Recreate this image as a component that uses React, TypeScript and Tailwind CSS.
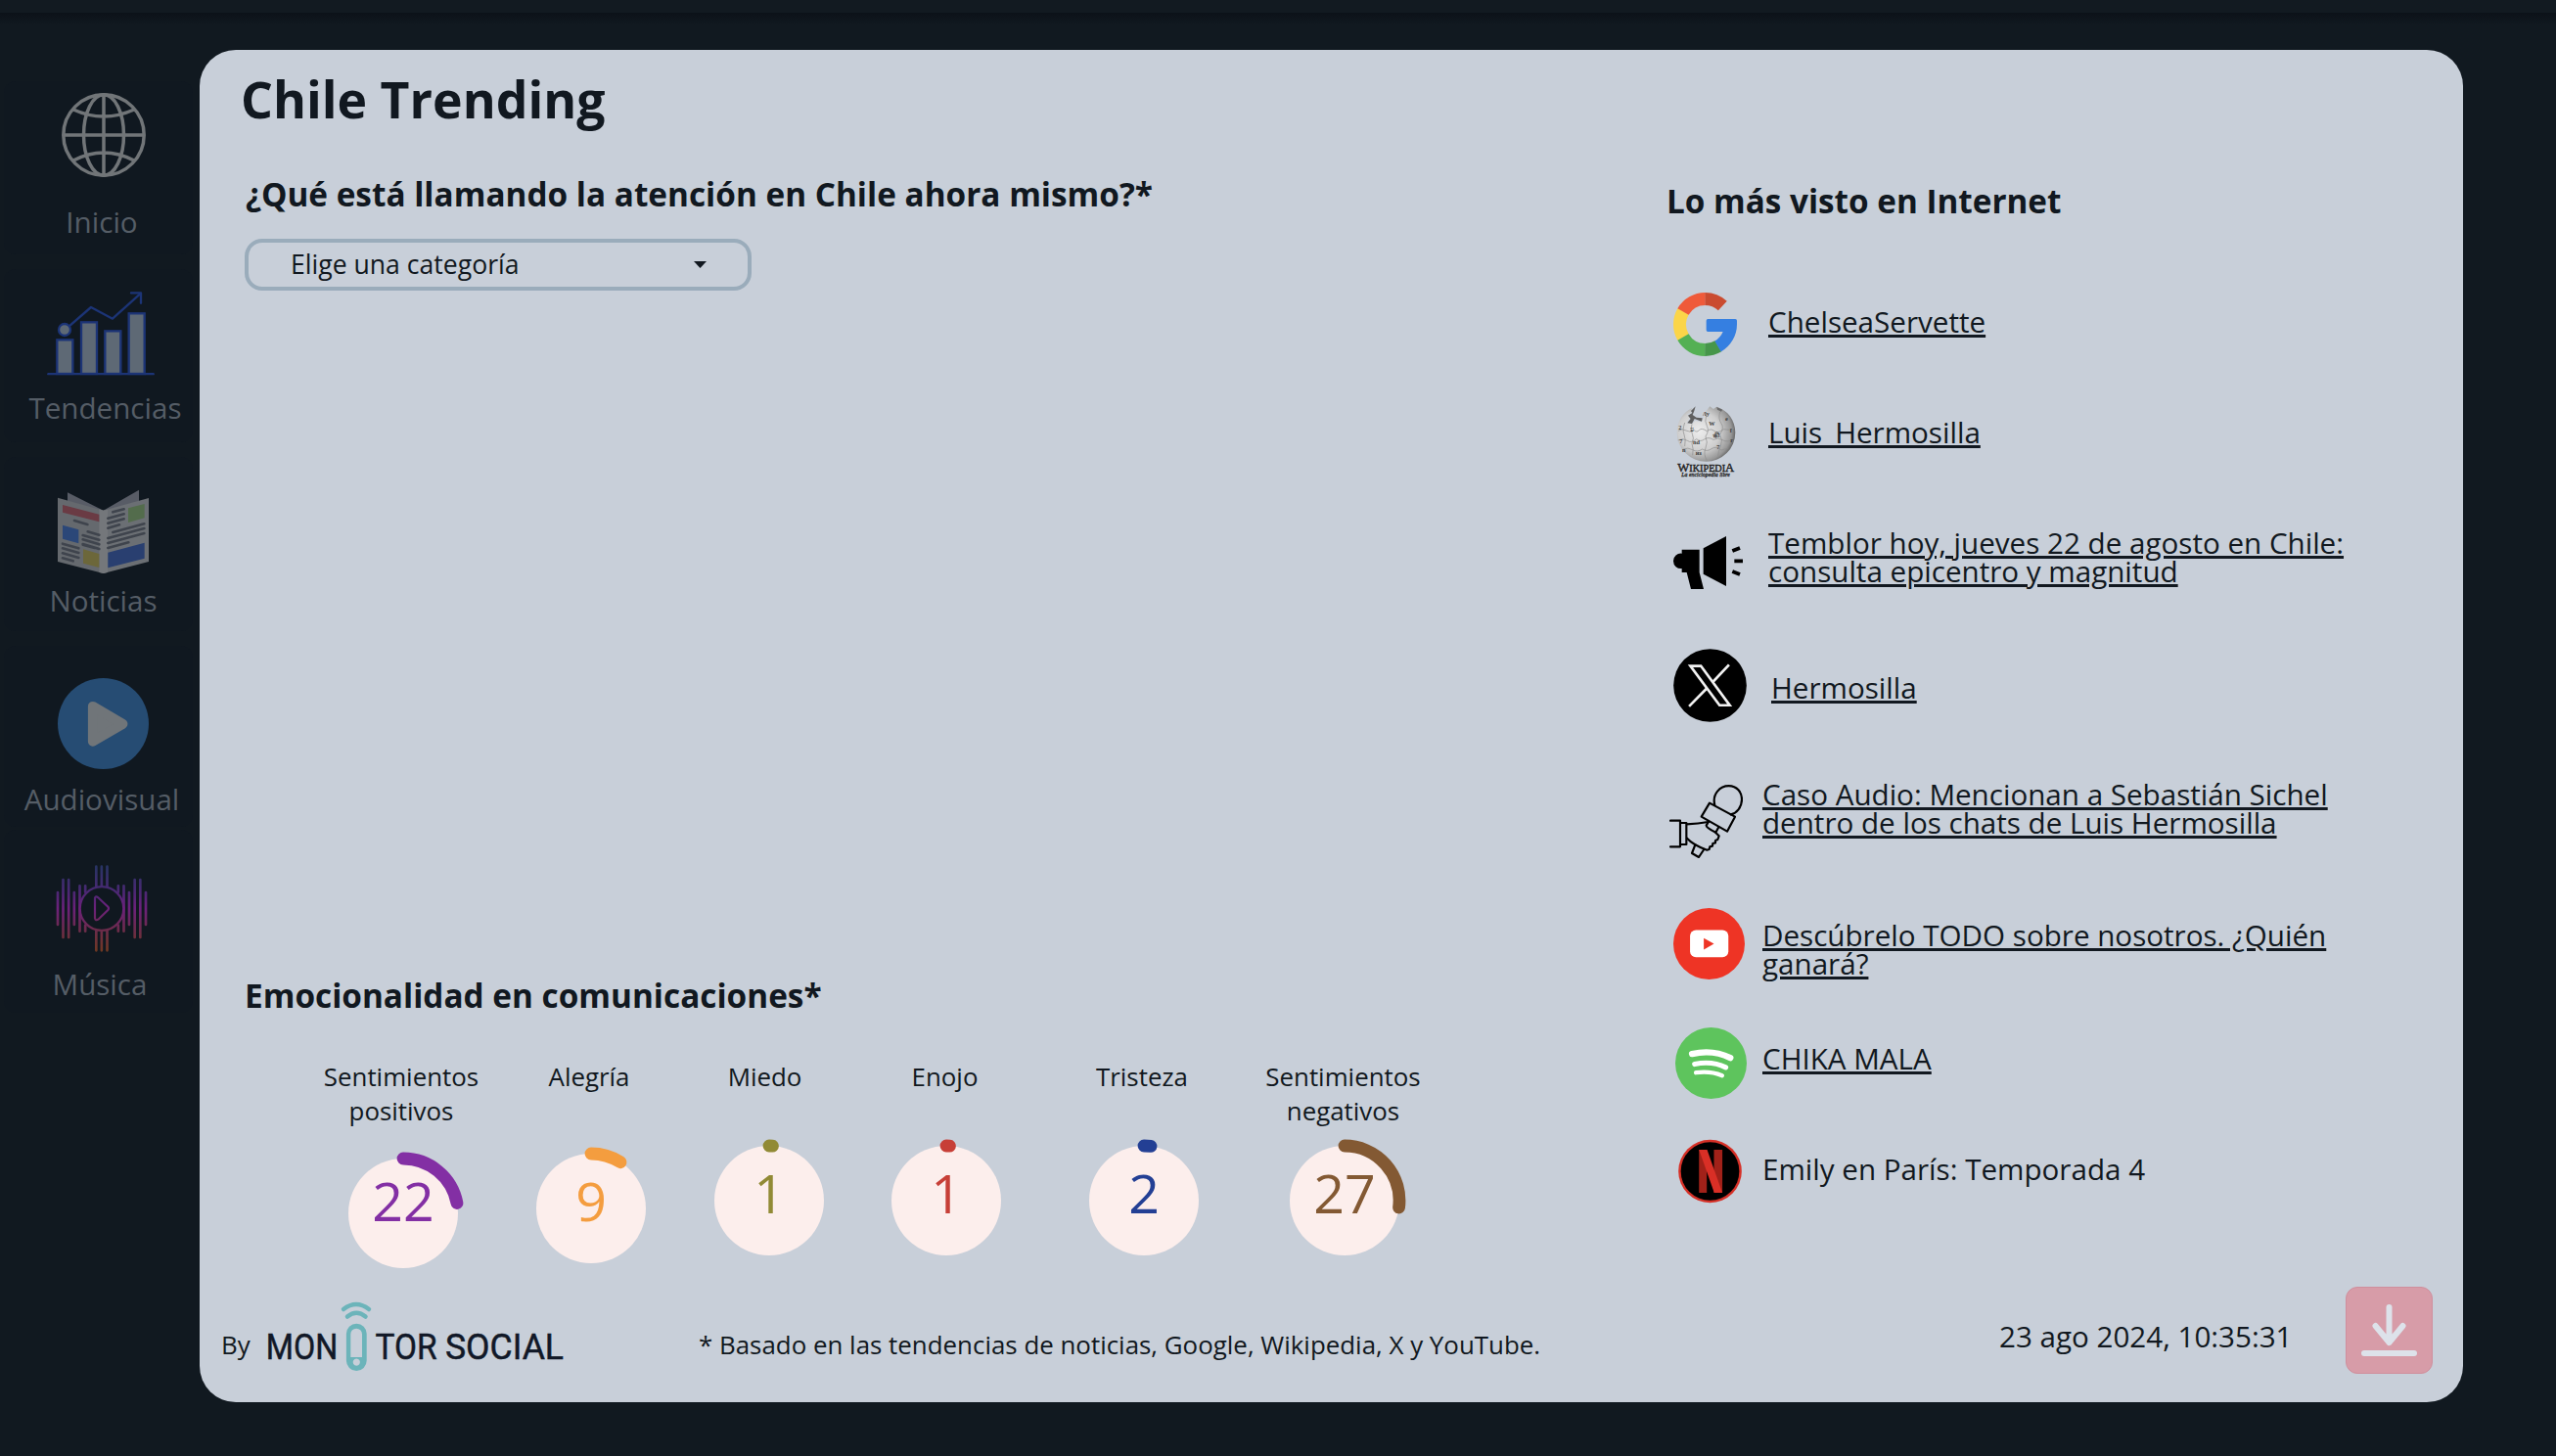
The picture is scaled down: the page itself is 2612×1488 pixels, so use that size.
import type { ReactNode } from 'react';

/* ---------- helpers ---------- */

function arcPath(cx: number, cy: number, r: number, from: number, to: number) {
  const a = (from * Math.PI) / 180;
  const b = (to * Math.PI) / 180;
  const large = Math.abs(to - from) > 180 ? 1 : 0;
  return `M${cx + r * Math.cos(a)} ${cy + r * Math.sin(a)}A${r} ${r} 0 ${large} 1 ${cx + r * Math.cos(b)} ${cy + r * Math.sin(b)}`;
}

/* ---------- sidebar icons ---------- */

function GlobeIcon() {
  return (
    <svg viewBox="0 0 86 86" className="ml-[59px] mt-3 h-[86px] w-[86px]" fill="none" stroke="#717578" strokeWidth="3.500">
      <circle cx="43" cy="43" r="41.2" />
      <ellipse cx="43" cy="43" rx="20.5" ry="41.2" />
      <path d="M43 1.7v82.6M1.7 43h82.6M12 17q31 14 62 0M12 69q31-16 62 0" />
    </svg>
  );
}

function TrendIcon() {
  return (
    <svg viewBox="144 114 330 258" className="ml-[44px] mt-[23px] h-[86px] w-[110px]" fill="none" stroke="#1c3476" strokeWidth="7">
      <g fill="#5e6975">
        <rect x="175" y="262" width="48" height="104" />
        <rect x="249" y="208" width="48" height="158" />
        <rect x="322" y="235" width="48" height="131" />
        <rect x="395" y="181" width="48" height="185" />
        <circle cx="198" cy="231" r="18" />
      </g>
      <path d="M148 366.500H470" strokeLinecap="round" />
      <path d="M212 220L279 162L345 197L432 119" strokeLinejoin="round" />
      <path d="M402 118H432V149" strokeLinecap="round" strokeLinejoin="round" />
    </svg>
  );
}

function NewsIcon() {
  return (
    <svg viewBox="177 720 279 258" className="ml-[55px] mt-[33px] h-[86px] w-[93px]">
      <path d="M207 730L317 785L426 722V790H207Z" fill="#585c66" />
      <path d="M177 746L317 785V978L177 942Z" fill="#65696e" />
      <path d="M317 785L456 747V942L317 978Z" fill="#6b6f74" />
      <path d="M304 781L317 785L330 782V975L317 978L304 975Z" fill="#74777b" />
      <path d="M192 768L304 797V820L192 791Z" fill="#6a3b44" />
      <path d="M192 830L241 844V886L192 872Z" fill="#2b4778" />
      <path d="M255 904L304 918V960L255 947Z" fill="#6c673a" />
      <path d="M393 778L443 765V808L393 822Z" fill="#536c4c" />
      <path d="M331 914L443 884V932L331 961Z" fill="#293f70" />
      <g stroke="#3f444d" strokeWidth="8" strokeLinecap="round">
        <path d="M228 816L268 828M269 850L304 860M254 861L304 875M254 874L304 889M254 888L304 903M254 890L290 900" />
        <path d="M192 887L241 901M192 901L241 915M192 916L241 930M192 931L224 940" />
        <path d="M346 790L380 781M331 809L380 796M331 824L380 811M331 839L366 829" />
        <path d="M346 852L442 826M331 870L442 840M331 885L442 855M331 900L394 883" />
      </g>
    </svg>
  );
}

function PlayIcon() {
  return (
    <svg viewBox="0 0 280 280" className="ml-[55px] mt-[33px] h-[93px] w-[93px]">
      <circle cx="140" cy="140" r="140" fill="#264c73" />
      <path d="M108 87L200 141L108 195Z" fill="#707579" stroke="#707579" strokeWidth="30" strokeLinejoin="round" />
    </svg>
  );
}

const WAVES: [number, number, number][] = [
  [177, 756, 855], [193.500, 717, 894], [210.500, 717, 894], [227.500, 756, 855], [244.500, 736, 875],
  [261.500, 736, 755], [261.500, 857, 875], [295, 677, 740], [311.500, 677, 738], [328.500, 677, 740],
  [295, 872, 934], [311.500, 874, 934], [328.500, 872, 934], [362.500, 736, 755], [362.500, 857, 875],
  [379.500, 736, 875], [396, 756, 855], [413, 717, 894], [430, 717, 894], [447, 756, 855],
];

function MusicIcon() {
  return (
    <svg viewBox="171 672 282 266" className="ml-[53px] mt-9 h-[88.700px] w-[94px]" fill="none" stroke="url(#wave)" strokeWidth="8" strokeLinecap="round">
      <defs>
        <linearGradient id="wave" gradientUnits="userSpaceOnUse" x1="0" y1="674" x2="0" y2="936">
          <stop offset="0" stopColor="#273463" />
          <stop offset="0.300" stopColor="#4a2873" />
          <stop offset="0.500" stopColor="#6c217b" />
          <stop offset="0.750" stopColor="#6b2b4b" />
          <stop offset="1" stopColor="#6f3822" />
        </linearGradient>
      </defs>
      {WAVES.map(([x, a, b], i) => (
        <path key={i} d={`M${x} ${a}L${x + 0.01} ${b}`} />
      ))}
      <circle cx="312" cy="805.500" r="67" fill="#101820" strokeWidth="7" />
      <path d="M291 773Q293 766 300 771L331 800Q335 805 331 810L301 839Q293 844 291 835Z" strokeWidth="6.500" />
    </svg>
  );
}

interface NavEntry {
  label: string;
  icon: ReactNode;
  card: string;
  text: string;
}

const NAV: NavEntry[] = [
  { label: 'Inicio', icon: <GlobeIcon />, card: 'mt-[83px] h-[177px]', text: 'mt-[26px] pl-[7px]' },
  { label: 'Tendencias', icon: <TrendIcon />, card: 'mt-[15px] h-[177px]', text: 'mt-[13px] pl-[14px]' },
  { label: 'Noticias', icon: <NewsIcon />, card: 'mt-[15px] h-[178px]', text: 'mt-[8px] pl-[10px]' },
  { label: 'Audiovisual', icon: <PlayIcon />, card: 'mt-[15px] h-[185px]', text: 'mt-[11px] pl-[7px]' },
  { label: 'Música', icon: <MusicIcon />, card: 'mt-[3px] h-[187px]', text: 'mt-[13px] pl-[3px]' },
];

/* ---------- source icons ---------- */

function GoogleIcon() {
  const seg = (from: number, to: number, color: string) => (
    <path d={arcPath(188.5, 514.5, 78, from, to)} stroke={color} strokeWidth="39" fill="none" />
  );
  return (
    <svg viewBox="91 417 195 195" className="ml-[10px] mt-[19px] h-[65px] w-[65px]">
      {seg(149.5, 210.5, '#fbd549')}
      {seg(210, 270.5, '#ef5a3a')}
      {seg(270, 313.3, '#ca4b30')}
      {seg(90, 150, '#54b054')}
      {seg(59, 90.5, '#46964a')}
      <path
        d="M237 598.500A97.500 97.500 0 0 0 286 514V503Q286 498 281 498H197Q192 498 192 503V532Q192 537 197 537H243A58 58 0 0 1 218 565.500Z"
        fill="#357fe1"
      />
    </svg>
  );
}

function WikipediaIcon() {
  return (
    <svg viewBox="98 45 184 222" className="ml-[13px] mt-[15px] h-[74px] w-[61.300px]">
      <defs>
        <radialGradient id="ball" cx="0.380" cy="0.450" r="0.650">
          <stop offset="0" stopColor="#ededed" />
          <stop offset="0.550" stopColor="#cfcfcf" />
          <stop offset="0.850" stopColor="#979797" />
          <stop offset="1" stopColor="#555555" />
        </radialGradient>
      </defs>
      <path
        d="M146 51C118 64 100 94 100 126A89.500 89.500 0 0 0 279 126C279 88 256 58 222 47L212 54L201 46L190 60L177 68L184 78L176 94L156 90L147 100L130 96L140 82L132 70L142 66Z"
        fill="url(#ball)"
      />
      <path d="M157 46L143 60L147 66L134 74L142 84L132 97L146 99L154 84L176 92L178 82L160 80L148 72L153 60Z" fill="#5f5f5f" />
      <path d="M222 48L240 56L236 62L224 56Z" fill="#6a6a6a" />
      <g fill="none" stroke="#8d8d8d" strokeWidth="2">
        <path d="M104 121Q116 112 128 120T152 118Q160 128 168 119T192 122Q204 112 214 121T244 116Q258 122 276 112" />
        <path d="M103 150Q120 142 132 151T160 146Q172 156 184 147T212 148Q226 140 240 149T272 146" />
        <path d="M118 178Q134 170 148 179T178 177Q192 186 206 176T236 180L258 174" />
        <path d="M146 100Q140 118 147 130T146 160Q152 176 148 196M190 74Q184 92 192 106T188 138Q196 156 188 174T192 212M232 62Q226 84 236 98T232 132Q242 150 234 168T226 200M124 96Q116 118 122 132T124 168" />
      </g>
      <g className="font-['Liberation_Serif'] font-bold" fill="#3d3d3d" fontSize="19">
        <text x="141" y="122">ע</text>
        <text x="198" y="106">W</text>
        <text x="212" y="144" transform="rotate(-8 212 144)">की</text>
        <text x="149" y="163">nd</text>
        <text x="157" y="195">из</text>
        <text x="105" y="118">2</text>
        <text x="222" y="178">7</text>
        <text x="262" y="126">f</text>
        <text x="108" y="160">7</text>
        <text x="264" y="156">r</text>
        <text x="116" y="186">n</text>
        <text x="180" y="75">/ly</text>
        <text x="248" y="90">e</text>
      </g>
      <text x="102" y="245" textLength="174" lengthAdjust="spacingAndGlyphs" className="font-['Liberation_Serif']" fill="#222222" stroke="#222222" strokeWidth="1.300">
        <tspan fontSize="40">W</tspan>
        <tspan fontSize="32">IKIPEDI</tspan>
        <tspan fontSize="40">A</tspan>
      </text>
      <text x="114" y="262" textLength="149" lengthAdjust="spacingAndGlyphs" fontSize="19" className="font-['Liberation_Serif'] italic" fill="#1d1d1d" stroke="#1d1d1d" strokeWidth="0.900">
        La enciclopedia libre
      </text>
    </svg>
  );
}

function MegaphoneIcon() {
  return (
    <svg viewBox="90 84 213 162" className="ml-[10px] mt-[18px] h-[54px] w-[71px]">
      <path d="M116 125H170V195L183 246H144L131 195H116V183A23 23 0 0 1 90 160A23 23 0 0 1 116 137Z" />
      <path d="M182 121L252 84V237L182 200Z" />
      <path d="M271 129L294 120M271 192L294 201M277 160H303" stroke="#000" strokeWidth="11.500" />
    </svg>
  );
}

function XIcon() {
  return (
    <svg viewBox="90 430 224 224" className="ml-[10px] mt-[13px] h-[75px] w-[75px]">
      <circle cx="202" cy="542" r="111.500" />
      <g fill="none" stroke="#f2f2f2" strokeWidth="8">
        <path d="M260 479L209 533M138 606L195 548" />
        <path d="M142 482.500H174L262 602.500H231Z" fill="#000" />
      </g>
    </svg>
  );
}

function MicIcon() {
  return (
    <svg viewBox="48 35 225 225" className="ml-[6px] mt-[22px] h-[75px] w-[75px]" fill="none" stroke="#000" strokeWidth="6.500" strokeLinejoin="round" strokeLinecap="round">
      <path d="M51 145H81V225H51M81 152H100V218H81M101 156C125 155 145 153 167 149" />
      <path d="M171 91L249 133L225 178L146 133Z" />
      <path d="M187 98C178 62 204 38.500 230 38.500C255 38.500 270 58 270 80C270 103 255 122 236 126" />
      <path d="M168 148L161 160Q162 168 190 181L199 165" />
      <path d="M190 182L200 192L196 203L189 206L189 213L181 215L180 223L172 225L170 233L163 235Q120 219 102 199" />
      <path d="M127 219L117 245L138 257L154 233" />
    </svg>
  );
}

function YouTubeIcon() {
  return (
    <svg viewBox="90 84 218 218" className="ml-[10px] mt-[18px] h-[73px] w-[73px]">
      <circle cx="199" cy="193" r="109" fill="#ee3425" />
      <rect x="141" y="151" width="117" height="83" rx="18" fill="#fff" />
      <path d="M183 176L214 193L183 211Z" fill="#ee3425" />
    </svg>
  );
}

function SpotifyIcon() {
  return (
    <svg viewBox="96 450 218 218" className="ml-[12px] mt-[10px] h-[73px] w-[73px]" fill="none" stroke="#fff" strokeLinecap="round">
      <circle cx="205" cy="559" r="109" fill="#5ec45d" stroke="none" />
      <path d="M147 531Q210 516 264 543" strokeWidth="19" />
      <path d="M155 562Q208 551 250 572" strokeWidth="15.500" />
      <path d="M159 588Q203 582 239 597" strokeWidth="13" />
    </svg>
  );
}

function NetflixIcon() {
  return (
    <svg viewBox="104 793 196 197" className="ml-[15px] mt-[14px] h-[66px] w-[65px]">
      <circle cx="202" cy="891.500" r="97.500" fill="#d63027" />
      <circle cx="202" cy="891.500" r="90" fill="#000" />
      <path d="M168 825H192V958H168ZM214 825H240V958H214Z" fill="#a12119" />
      <path d="M168 825H193L240 958H215Z" fill="#d92f26" />
    </svg>
  );
}

interface Source {
  icon: ReactNode;
  lines: string[];
  row: string;
  text: string;
  link: boolean;
}

const SOURCES: Source[] = [
  { icon: <GoogleIcon />, lines: ['ChelseaServette'], row: 'h-[120px]', text: 'ml-[6px] mt-[34px]', link: true },
  { icon: <WikipediaIcon />, lines: ['Luis_Hermosilla'], row: 'h-[130px]', text: 'ml-[6px] mt-[27px]', link: true },
  {
    icon: <MegaphoneIcon />,
    lines: ['Temblor hoy, jueves 22 de agosto en Chile:', 'consulta epicentro y magnitud'],
    row: 'h-[120px]',
    text: 'ml-[6px] mt-[10px]',
    link: true,
  },
  { icon: <XIcon />, lines: ['Hermosilla'], row: 'h-[130px]', text: 'ml-[9px] mt-[38px]', link: true },
  {
    icon: <MicIcon />,
    lines: ['Caso Audio: Mencionan a Sebastián Sichel', 'dentro de los chats de Luis Hermosilla'],
    row: 'h-[130px]',
    text: 'mt-[17px]',
    link: true,
  },
  {
    icon: <YouTubeIcon />,
    lines: ['Descúbrelo TODO sobre nosotros. ¿Quién', 'ganará?'],
    row: 'h-[130px]',
    text: 'mt-[31px]',
    link: true,
  },
  { icon: <SpotifyIcon />, lines: ['CHIKA MALA'], row: 'h-[110px]', text: 'mt-[27px]', link: true },
  { icon: <NetflixIcon />, lines: ['Emily en París: Temporada 4'], row: 'h-[90px]', text: 'mt-[30px]', link: false },
];

/* ---------- emotions ---------- */

interface Emotion {
  label: string[];
  value: number;
  color: string;
  col: string;
  dial: string;
  num: string;
  pad: string;
}

const EMOTIONS: Emotion[] = [
  { label: ['Sentimientos', 'positivos'], value: 22, color: '#832fa4', col: '', dial: 'mt-[24px]', num: 'pt-[22px]', pad: 'pr-[4px]' },
  { label: ['Alegría'], value: 9, color: '#f49d3f', col: 'ml-[22px]', dial: 'mt-[19px]', num: 'pt-[27px]', pad: 'pr-[4px]' },
  { label: ['Miedo'], value: 1, color: '#918a35', col: 'ml-[12px]', dial: 'mt-[11px]', num: 'pt-[27px]', pad: 'pr-[9px]' },
  { label: ['Enojo'], value: 1, color: '#c73f37', col: 'ml-[11px]', dial: 'mt-[11px]', num: 'pt-[27px]', pad: 'pr-[3px]' },
  { label: ['Tristeza'], value: 2, color: '#233f94', col: 'ml-[32px]', dial: 'mt-[11px]', num: 'pt-[27px]', pad: 'pr-[4px]' },
  { label: ['Sentimientos', 'negativos'], value: 27, color: '#835933', col: 'ml-[35px]', dial: 'mt-[11px]', num: 'pt-[27px]', pad: 'pr-[3px]' },
];

function Dial({ value, color, className, num }: { value: number; color: string; className: string; num: string }) {
  return (
    <div className={`grid h-[126px] w-[126px] ${className}`}>
      <svg viewBox="0 0 126 126" className="col-start-1 row-start-1 h-[126px] w-[126px]" fill="none">
        <circle cx="63" cy="63" r="56" fill="#fceeec" />
        <path d={arcPath(63, 63, 56, -90, -90 + value * 3.6)} stroke={color} strokeWidth="12.800" strokeLinecap="round" />
      </svg>
      <span className={`col-start-1 row-start-1 text-center text-[55.500px] leading-[56px] ${num}`} style={{ color }}>
        {value}
      </span>
    </div>
  );
}

/* ---------- brand ---------- */

function BrandLogo() {
  return (
    <svg viewBox="270 1325 310 80" className="mt-[25px] ml-[14px] h-[80px] w-[310px] overflow-visible">
      <g className="font-[Roboto]" fontSize="37" fill="#111827" stroke="#111827" strokeWidth="0.500">
        <text x="271.800" y="1389" textLength="73.500" lengthAdjust="spacingAndGlyphs">MON</text>
        <text x="383.500" y="1389" textLength="63" lengthAdjust="spacingAndGlyphs">TOR</text>
        <text x="455" y="1389" textLength="121" lengthAdjust="spacingAndGlyphs">SOCIAL</text>
      </g>
      <path
        fillRule="evenodd"
        fill="#6cb4ba"
        d="M364.300 1352.700a10.400 10.400 0 0 1 10.400 10.400V1390.600a10.400 10.400 0 0 1-20.800 0V1363.100a10.400 10.400 0 0 1 10.400-10.400ZM358.300 1387H370V1363.500a5.850 5.850 0 0 0-11.700 0ZM364.300 1388.500a3.600 3.600 0 1 0 0.010 0Z"
      />
      <path d="M351 1338Q364 1328 377 1338M355 1345.500Q364.300 1338 373.500 1345.500" fill="none" stroke="#6cb4ba" strokeWidth="4.500" strokeLinecap="round" />
    </svg>
  );
}

export default function App() {
  return (
    <div className="flex h-[1488px] w-[2612px] overflow-hidden bg-[linear-gradient(to_bottom,#121a21_0px,#121a21_13px,#0c1219_13px,#111920_26px,#111920_100%)] font-['Open_Sans',sans-serif] text-[#111820]">
      <nav className="flex w-[204px] flex-none flex-col pl-1">
        {NAV.map((n) => (
          <a key={n.label} className={`flex w-[193px] flex-none flex-col rounded-xl bg-[#101820] ${n.card}`}>
            {n.icon}
            <span className={`text-center text-[29.580px] leading-[40px] whitespace-nowrap text-[#555d66] ${n.text}`}>{n.label}</span>
          </a>
        ))}
      </nav>

      <main className="mt-[51px] flex h-[1382px] w-[2313px] flex-none flex-col rounded-[37px] bg-[#c8cfd9]">
        <div className="flex h-[1249px]">
          <section className="flex w-[1496px] flex-none flex-col">
            <h1 className="mt-[20px] ml-[42px] text-[51.760px] leading-[60px] font-bold">Chile Trending</h1>
            <h2 className="mt-[47px] ml-[47px] text-[33.330px] leading-[40px] font-bold">
              ¿Qué está llamando la atención en Chile ahora mismo?*
            </h2>
            <button className="mt-[26px] ml-[46px] flex h-[53px] w-[518px] flex-none items-center justify-between rounded-[18px] border-4 border-[#9aacbb] pr-[42px] pl-[43px] text-[26.600px] leading-[35px]">
              Elige una categoría
              <svg viewBox="0 0 13 7" className="h-[7px] w-[13px]">
                <path d="M0 0H13L6.500 7Z" fill="#111820" />
              </svg>
            </button>

            <h2 className="mt-[700px] ml-[46px] flex-none text-[33.330px] leading-[40px] font-bold">Emocionalidad en comunicaciones*</h2>
            <div className="mt-[46px] ml-[123px] flex flex-none">
              {EMOTIONS.map((e, i) => (
                <div key={i} className={`flex w-[170px] flex-none flex-col items-center ${e.col}`}>
                  <div className={`h-[70px] text-center text-[25.880px] leading-[35px] ${e.pad}`}>
                    {e.label.map((l) => (
                      <div key={l}>{l}</div>
                    ))}
                  </div>
                  <Dial value={e.value} color={e.color} className={e.dial} num={e.num} />
                </div>
              ))}
            </div>
          </section>

          <section className="flex flex-col">
            <h2 className="mt-[134px] ml-[3px] text-[33.280px] leading-[40px] font-bold">Lo más visto en Internet</h2>
            <ul className="mt-[55px] flex flex-col">
              {SOURCES.map((s, i) => (
                <li key={i} className={`flex flex-none items-start ${s.row}`}>
                  <div className="w-[101px] flex-none">{s.icon}</div>
                  <div className={`text-[29.600px] leading-[29px] whitespace-nowrap ${s.text}`}>
                    {s.lines.map((l) => (
                      <div key={l} className={s.link ? 'underline decoration-[2.500px] underline-offset-[2px]' : ''}>
                        {l}
                      </div>
                    ))}
                  </div>
                </li>
              ))}
            </ul>
          </section>
        </div>

        <footer className="flex h-[133px] items-start">
          <span className="mt-[57px] ml-[22px] w-[30px] text-[25.880px] leading-[35px]">By</span>
          <BrandLogo />
          <p className="mt-[57px] ml-[134px] w-[1329px] text-[25.900px] leading-[35px]">
            * Basado en las tendencias de noticias, Google, Wikipedia, X y YouTube.
          </p>
          <time className="mt-[46px] w-[354px] text-[29.580px] leading-[40px]">23 ago 2024, 10:35:31</time>
          <button className="mt-[15px] h-[89px] w-[89px] flex-none rounded-xl border border-[#cf8f9d] bg-[#d79ca8]">
            <svg viewBox="0 0 87 87" className="h-[87px] w-[87px]" fill="none" stroke="#dde2ea" strokeWidth="6" strokeLinecap="round" strokeLinejoin="round">
              <path d="M43.500 20V56M29.500 39L43.500 56L57.500 39M18 67H69" />
            </svg>
          </button>
        </footer>
      </main>
    </div>
  );
}
